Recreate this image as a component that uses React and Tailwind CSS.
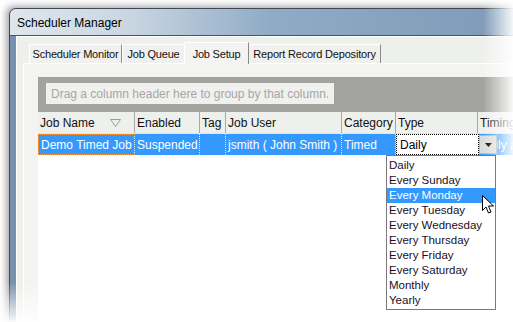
import React from 'react';

const columns = [
    { key: 'name', label: 'Job Name', width: 'w-[97px]' },
    { key: 'enabled', label: 'Enabled', width: 'w-[65px]' },
    { key: 'tag', label: 'Tag', width: 'w-[26px]' },
    { key: 'user', label: 'Job User', width: 'w-[116px]' },
    { key: 'category', label: 'Category', width: 'w-[54px]' },
    { key: 'type', label: 'Type', width: 'w-[82px]' },
    { key: 'timing', label: 'Timing', width: 'w-[120px]' },
];

const row = {
    name: 'Demo Timed Job',
    enabled: 'Suspended',
    tag: '',
    user: 'jsmith ( John Smith )',
    category: 'Timed',
    type: '',
    timing: 'Daily at 9:00 AM',
};

const tabs = [
    { label: 'Scheduler Monitor', width: 'w-[93px]' },
    { label: 'Job Queue', width: 'w-[63px]' },
    { label: 'Job Setup', width: 'w-[65px]' },
    { label: 'Report Record Depository', width: 'w-[133px]' },
];

const options = [
    'Daily', 'Every Sunday', 'Every Monday', 'Every Tuesday', 'Every Wednesday',
    'Every Thursday', 'Every Friday', 'Every Saturday', 'Monthly', 'Yearly',
];

const App = () => {
    return (
        <div className="relative w-[513px] h-[322px] overflow-hidden bg-white font-['Liberation_Sans',sans-serif] text-[12px] text-[#111]">
            <div className="pl-[9px] pt-[8px]">
                <div className="flex flex-col w-[560px] h-[340px] rounded-tl-[7px] border border-[#3e4856] bg-[#7891ae] shadow-[-3px_-2px_7px_rgba(0,0,0,0.35)]">
                    {/* Title bar */}
                    <div className="flex items-center h-[26px] pl-[7px] pt-[1px] rounded-tl-[6px] bg-[linear-gradient(90deg,#dfe6ec_0px,#c9d6e2_120px,#90abc6_260px,#809cb8_480px)] text-[12px] text-black">
                        Scheduler Manager
                    </div>
                    <div className="h-px bg-[#43556b]"></div>
                    {/* Body with blue frame */}
                    <div className="flex flex-1 pl-[6px]">
                        <div className="flex flex-col flex-1 border-t border-l border-white bg-[#eef0ec] pt-[5px] pl-[6px]">
                            {/* Tabs */}
                            <div className="flex items-end h-[21px] pl-[6px] text-[11px] tracking-[-0.2px]">
                                {tabs.map(tab => tab.label === 'Job Setup' ? (
                                    <div key={tab.label} className={`${tab.width} relative z-10 flex justify-center h-[22px] -mb-px pt-[3px] -mx-px border-t border-l border-white border-r border-r-[#8a8a8a] bg-[#f3f3f1]`}>
                                        {tab.label}
                                    </div>
                                ) : (
                                    <div key={tab.label} className={`${tab.width} flex items-center justify-center h-[19px] border-t border-l border-white border-r border-r-[#8a8a8a] bg-[#f0f0ee]`}>
                                        {tab.label}
                                    </div>
                                ))}
                            </div>
                            {/* Tab page */}
                            <div className="flex-1 border-t border-l border-white bg-[#f3f3f1] pt-[13px] pl-[14px]">
                                <div className="flex flex-col h-full bg-white">
                                    <div className="h-[35px] bg-[#a2a29e] pl-[8px] pt-[6px]">
                                        <div className="flex items-center w-[288px] h-[21px] pl-[5px] bg-[#f0f0ee] text-[#a6a6a6]">
                                            Drag a column header here to group by that column.
                                        </div>
                                    </div>
                                    {/* Header */}
                                    <div className="flex h-[22px] bg-[#eef0ec] border-b border-[#e2e4e0]">
                                        {columns.map(col => (
                                            <div key={col.key} className={`${col.width} shrink-0 flex items-center justify-between pl-[2px] pr-[13px] border-r border-[#a8a8a4]`}>
                                                <span>{col.label}</span>
                                                {col.key === 'name' && (
                                                    <svg width="11" height="8" viewBox="0 0 11 8" className="mt-[1px]">
                                                        <path d="M0.5 0.5 H10.5 L5.5 7.5 Z" fill="none" stroke="#9a9a9a" strokeWidth="1" />
                                                    </svg>
                                                )}
                                            </div>
                                        ))}
                                    </div>
                                    {/* Data row */}
                                    <div className="flex h-[21px] bg-[#3399ff] text-white">
                                        {columns.map((col, i) => (
                                            <div
                                                key={col.key}
                                                className={`${col.width} shrink-0 flex items-center pl-[2px] whitespace-nowrap overflow-hidden border-r border-dotted border-r-white/80 ${i === 0 ? 'border-l border-t border-b border-dotted border-l-[#ff9c3a] border-t-[#ff9c3a] border-b-[#ff9c3a]' : ''}`}
                                            >
                                                {row[col.key]}
                                            </div>
                                        ))}
                                    </div>
                                </div>
                            </div>
                        </div>
                    </div>
                </div>
            </div>

            {/* Combo editor in Type cell */}
            <div className="absolute left-[396px] top-[134px] flex h-[21px]">
                <div className="flex items-center w-[83px] h-full pl-[3px] bg-white border border-dotted border-black text-black">
                    Daily
                </div>
                <div className="flex items-center justify-center w-[18px] h-[19px] mt-[1px] bg-[#dcdcd8] border border-[#b8b8b4]">
                    <svg width="7" height="4" viewBox="0 0 7 4">
                        <path d="M0 0 H7 L3.5 4 Z" fill="#000" />
                    </svg>
                </div>
            </div>

            {/* Fades */}
            <div className="absolute right-0 top-0 w-[30px] h-full bg-[linear-gradient(90deg,rgba(255,255,255,0),rgba(255,255,255,0.92))]"></div>
            <div className="absolute left-0 bottom-0 w-full h-[40px] bg-[linear-gradient(180deg,rgba(255,255,255,0),rgba(255,255,255,0.95))]"></div>

            {/* Dropdown list */}
            <div className="absolute left-[386px] top-[155px] w-[110px] pt-[2px] pb-[1px] bg-white border border-[#7a7a7a] text-[11.5px] text-[#1a0f1f]">
                {options.map(opt => (
                    <div
                        key={opt}
                        className={`flex items-center h-[15px] pl-[2px] ${opt === 'Every Monday' ? 'bg-[#3399ff] text-white' : ''}`}
                    >
                        {opt}
                    </div>
                ))}
            </div>

            {/* Mouse cursor */}
            <svg className="absolute left-[482px] top-[195px]" width="14" height="20" viewBox="0 0 14 20">
                <path d="M0.5 0.5 L0.5 15.5 L4 12 L6.5 18 L9 17 L6.5 11 L11.5 11 Z" fill="#fff" stroke="#000" strokeWidth="1" strokeLinejoin="round" />
            </svg>
        </div>
    );
};

export default App;
